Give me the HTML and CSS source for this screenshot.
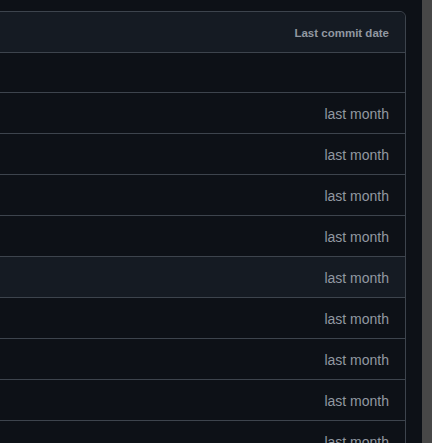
FILE: index.html
```html
<!DOCTYPE html>
<html>
<head>
<meta charset="utf-8">
<link rel="stylesheet" href="styles.css">
</head>
<body>
<div class="page">
  <main class="main">
    <div class="table">
      <div class="row head"><span class="col-date">Last commit date</span></div>
      <div class="row empty"></div>
      <div class="row"><span class="date">last month</span></div>
      <div class="row"><span class="date">last month</span></div>
      <div class="row"><span class="date">last month</span></div>
      <div class="row"><span class="date">last month</span></div>
      <div class="row hover"><span class="date">last month</span></div>
      <div class="row"><span class="date">last month</span></div>
      <div class="row"><span class="date">last month</span></div>
      <div class="row"><span class="date">last month</span></div>
      <div class="row"><span class="date">last month</span></div>
    </div>
  </main>
  <div class="scrollbar"></div>
</div>
</body>
</html>
```
FILE: styles.css
```css
html, body {
  margin: 0;
  padding: 0;
  height: 100%;
  overflow: hidden;
  background: #0d1117;
  font-family: "Liberation Sans", Arial, sans-serif;
}
.page {
  display: flex;
  height: 100%;
}
.main {
  flex: 1;
  min-width: 0;
  padding-top: 11px;
  overflow: hidden;
}
.scrollbar {
  width: 10px;
  flex: none;
  background: #474747;
}
.table {
  margin-left: -20px;
  margin-right: 16px;
  border: 1px solid #3d444d;
  border-radius: 6px;
}
.row {
  height: 40px;
  display: flex;
  align-items: center;
  justify-content: flex-end;
  padding-right: 16px;
  border-bottom: 1px solid #3d444d;
}
.row:last-child {
  border-bottom: none;
}
.head {
  background: #151b23;
  border-radius: 0 6px 0 0;
}
.empty {
  height: 39px;
}
.hover {
  background: #151b23;
}
.col-date {
  font-size: 11.5px;
  font-weight: 700;
  color: #9198a1;
  padding-top: 1px;
}
.date {
  font-size: 14px;
  color: #9198a1;
  padding-top: 1px;
}
```
